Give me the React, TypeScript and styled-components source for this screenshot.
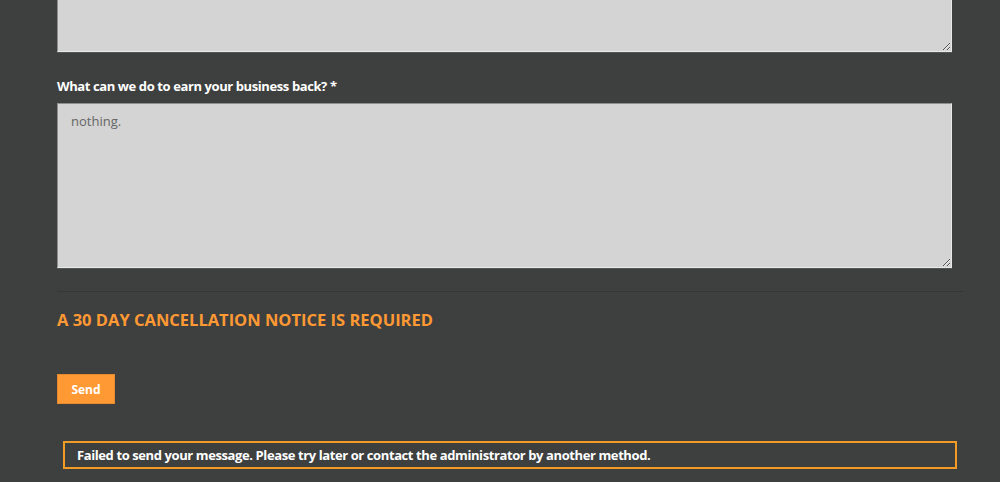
import React from 'react';
import styled, { createGlobalStyle } from 'styled-components';

const GlobalStyle = createGlobalStyle`
  html, body {
    margin: 0;
    padding: 0;
    background: #3e4040;
    font-family: 'Open Sans', 'Liberation Sans', sans-serif;
  }
`;

const Page = styled.div`
  width: 1000px;
  height: 482px;
  overflow: hidden;
  padding-left: 57px;
  box-sizing: border-box;
`;

const Form = styled.form`
  width: 906px;
  display: flex;
  flex-direction: column;
`;

const TextArea = styled.textarea<{ $h: number; $cut?: boolean }>`
  display: block;
  width: 895px;
  height: ${(p) => p.$h}px;
  box-sizing: border-box;
  background: #d4d4d4;
  border: 1px solid;
  border-color: #8e8e8e #e8e8e8 #e8e8e8 #8e8e8e;
  border-top-width: ${(p) => (p.$cut ? 0 : 1)}px;
  box-shadow: 0 1px 0 #555;
  padding: 8px 13px;
  font-family: 'Open Sans', 'Liberation Sans', sans-serif;
  font-size: 13px;
  color: #666;
  resize: vertical;
  outline: none;
`;

const Label = styled.label`
  display: block;
  margin: 25px 0 8px;
  font-size: 13px;
  font-weight: 700;
  line-height: 18px;
  letter-spacing: -0.4px;
  color: #ffffff;
`;

const Rule = styled.hr`
  margin: 23px 0 0;
  border: none;
  border-top: 1px solid #353737;
  width: 906px;
`;

const Notice = styled.h3`
  margin: 17px 0 0;
  font-size: 16.5px;
  font-weight: 700;
  line-height: 22px;
  text-transform: uppercase;
  color: #ff9933;
`;

const SendButton = styled.button`
  align-self: flex-start;
  margin-top: 43px;
  width: 58px;
  height: 30px;
  background: #ff9933;
  border: 1px solid #e58a2e;
  color: #ffffff;
  font-family: 'Open Sans', 'Liberation Sans', sans-serif;
  font-size: 12px;
  font-weight: 700;
  cursor: pointer;
`;

const Alert = styled.div`
  margin: 37px 0 0 6px;
  width: 894px;
  height: 28px;
  box-sizing: border-box;
  border: 2px solid #f39c25;
  padding: 0 12px;
  display: flex;
  align-items: center;
  font-size: 13px;
  font-weight: 700;
  letter-spacing: -0.4px;
  color: #ffffff;
`;

const App = () => {
  return (
    <Page>
      <GlobalStyle />
      <Form onSubmit={(e) => e.preventDefault()}>
        <TextArea $h={52} $cut />
        <Label>What can we do to earn your business back? *</Label>
        <TextArea $h={165} defaultValue="nothing." />
        <Rule />
        <Notice>A 30 day cancellation notice is required</Notice>
        <SendButton type="submit">Send</SendButton>
        <Alert>Failed to send your message. Please try later or contact the administrator by another method.</Alert>
      </Form>
    </Page>
  );
};

export default App;
